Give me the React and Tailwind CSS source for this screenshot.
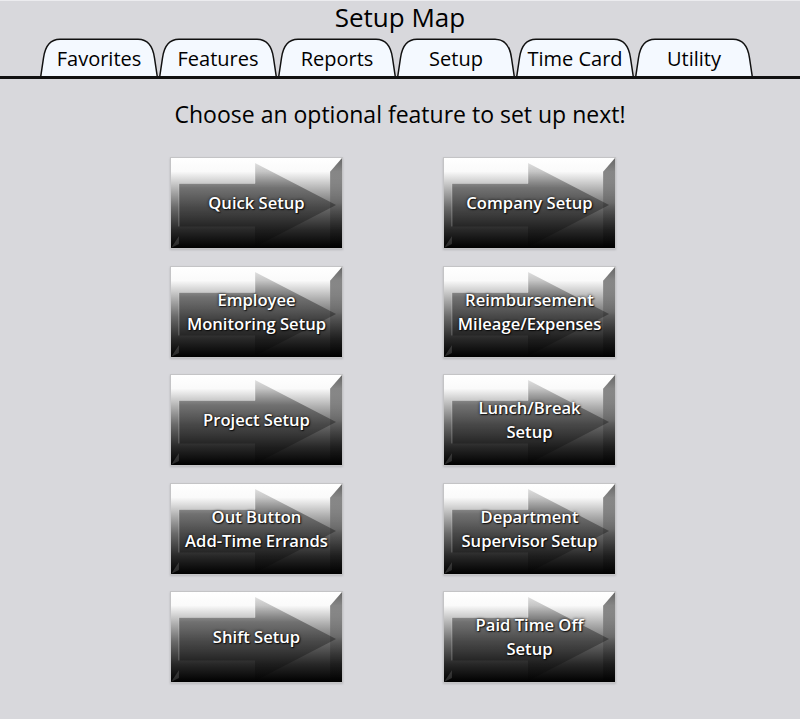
import React, { useId } from 'react';

const tabs = ['Favorites', 'Features', 'Reports', 'Setup', 'Time Card', 'Utility'];

const buttons = [
  ['Quick Setup'],
  ['Company Setup'],
  ['Employee', 'Monitoring Setup'],
  ['Reimbursement', 'Mileage/Expenses'],
  ['Project Setup'],
  ['Lunch/Break', 'Setup'],
  ['Out Button', 'Add-Time Errands'],
  ['Department', 'Supervisor Setup'],
  ['Shift Setup'],
  ['Paid Time Off', 'Setup'],
];

const Tab = ({ label }) => (
  <div className="relative h-[38px] w-[118px]">
    <svg viewBox="0 0 118 38" className="absolute inset-0 h-full w-full">
      <path
        d="M0.8,38 L3.5,20 Q6,1.2 20,1.2 L98,1.2 Q112,1.2 114.5,20 L117.2,38"
        fill="#f4f9ff"
        stroke="#111"
        strokeWidth="1.5"
      />
    </svg>
    <span className="relative flex h-full items-center justify-center pt-[3px] text-[20px] font-medium text-black">
      {label}
    </span>
  </div>
);

const ArrowButton = ({ lines }) => {
  const id = useId().replace(/:/g, '');
  return (
    <button className="relative h-[92px] w-[173px] border border-[#c4c4c6] shadow-[0_1px_2px_rgba(0,0,0,0.15)]">
      <svg viewBox="0 0 173 92" preserveAspectRatio="none" className="absolute inset-0 h-full w-full">
        <defs>
          <linearGradient id={`bg${id}`} x1="0" y1="0" x2="0" y2="1">
            <stop offset="0" stopColor="#ffffff" />
            <stop offset="0.15" stopColor="#fafafa" />
            <stop offset="0.35" stopColor="#b0b0b0" />
            <stop offset="0.55" stopColor="#6a6a6a" />
            <stop offset="0.8" stopColor="#282828" />
            <stop offset="1" stopColor="#000000" />
          </linearGradient>
          <linearGradient id={`ar${id}`} x1="0" y1="0" x2="0" y2="1">
            <stop offset="0" stopColor="#000" stopOpacity="0.12" />
            <stop offset="0.3" stopColor="#000" stopOpacity="0.38" />
            <stop offset="1" stopColor="#000" stopOpacity="0.2" />
          </linearGradient>
          <linearGradient id={`rb${id}`} x1="0" y1="0" x2="0" y2="1">
            <stop offset="0" stopColor="#000" stopOpacity="0.6" />
            <stop offset="0.5" stopColor="#000" stopOpacity="0.15" />
            <stop offset="1" stopColor="#000" stopOpacity="0.3" />
          </linearGradient>
        </defs>
        <rect x="0" y="0" width="173" height="92" fill={`url(#bg${id})`} />
        <path
          d="M8,26 L85,26 L85,5 L167,48 L85,91 L85,70 L8,70 Z"
          fill={`url(#ar${id})`}
        />
        <path d="M8,70 L8,26 L85,26 L85,5" fill="none" stroke="#fff" strokeOpacity="0.3" strokeWidth="1" />
        <path d="M161,14 L173,0 L173,92 L161,92 Z" fill={`url(#rb${id})`} />
        <path d="M0,92 L8,80 L8,88 Z" fill="#fff" fillOpacity="0.15" />
      </svg>
      <span className="relative flex h-full flex-col items-center justify-center text-[16.6px] font-semibold leading-[24px] text-white [text-shadow:0_0_3px_rgba(0,0,0,0.9),1px_1px_1px_rgba(0,0,0,0.7)]">
        {lines.map((l) => (
          <span key={l}>{l}</span>
        ))}
      </span>
    </button>
  );
};

export default function App() {
  return (
    <div className="min-h-[719px] w-[800px] border-t border-[#ececef] bg-[#d8d8dc] font-['Open_Sans','Noto_Sans',sans-serif]">
      <h1 className="text-center text-[26px] font-medium leading-[32px] text-black">Setup Map</h1>
      <div className="mt-[5px] flex gap-[1px] pl-[40px]">
        {tabs.map((t) => (
          <Tab key={t} label={t} />
        ))}
      </div>
      <div className="h-[3px] bg-[#111]" />
      <p className="mt-[20px] text-center text-[23px] font-medium leading-[30px] text-black">
        Choose an optional feature to set up next!
      </p>
      <div className="mt-[28px] grid w-fit grid-cols-[173px_173px] gap-x-[100px] gap-y-[16.5px] pl-[170px]">
        {buttons.map((b) => (
          <ArrowButton key={b.join()} lines={b} />
        ))}
      </div>
    </div>
  );
}
